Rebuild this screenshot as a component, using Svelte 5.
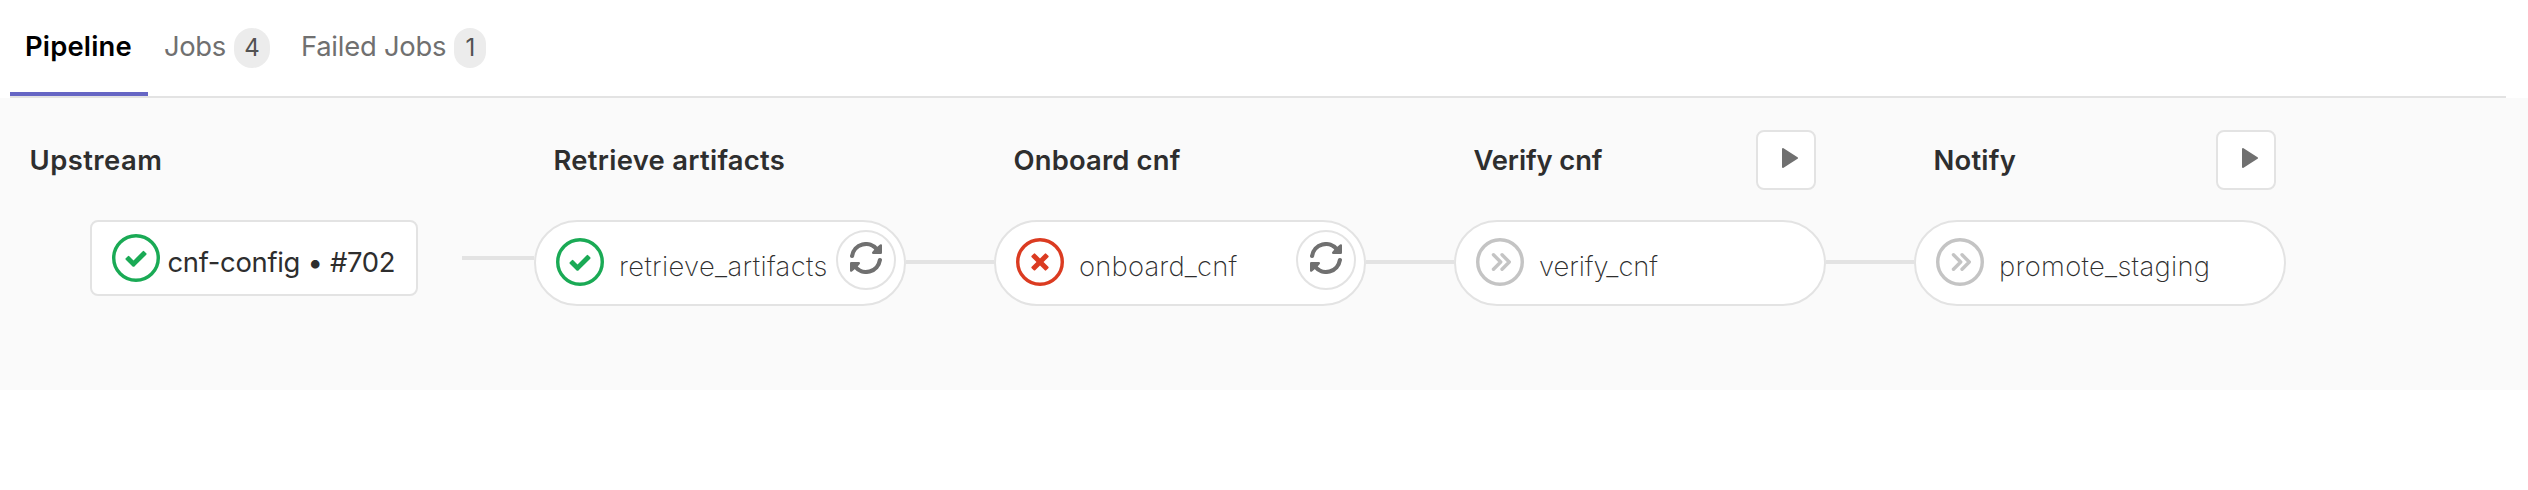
<script>
  const tabs = [
    { label: 'Pipeline', active: true, spacing: 0.18 },
    { label: 'Jobs', count: 4, spacing: -0.35, badgeWidth: 36 },
    { label: 'Failed Jobs', count: 1, spacing: -0.22, badgeWidth: 32 }
  ];

  const stages = [
    { title: 'Retrieve artifacts', titleSpacing: 0.3, job: 'retrieve_artifacts', jobSpacing: 0.35, status: 'success', retry: true },
    { title: 'Onboard cnf', titleSpacing: 0.16, job: 'onboard_cnf', jobSpacing: 0.2, status: 'failed', retry: true },
    { title: 'Verify cnf', titleSpacing: -0.1, job: 'verify_cnf', jobSpacing: -0.04, status: 'skipped', play: true },
    { title: 'Notify', titleSpacing: 0.24, job: 'promote_staging', jobSpacing: 0.3, status: 'skipped', play: true }
  ];
</script>

{#snippet statusIcon(status)}
  <svg class="status {status}" viewBox="0 0 14 14" aria-hidden="true">
    <circle cx="7" cy="7" r="6.5" fill="#fff" stroke="currentColor" />
    {#if status === 'success'}
      <path fill="currentColor" d="M6.278 7.697L5.045 6.464a.296.296 0 0 0-.42-.002l-.613.614a.298.298 0 0 0 .002.42l1.91 1.909a.5.5 0 0 0 .703.005l.265-.265L9.997 6.04a.291.291 0 0 0-.009-.408l-.614-.614a.29.29 0 0 0-.408-.009L6.278 7.697z" />
    {:else if status === 'failed'}
      <path fill="currentColor" d="M7 5.969L5.599 4.568a.29.29 0 0 0-.413.004l-.614.614a.294.294 0 0 0-.004.413L5.968 7l-1.4 1.401a.29.29 0 0 0 .004.413l.614.614c.113.114.3.117.413.004L7 8.032l1.401 1.4a.29.29 0 0 0 .413-.004l.614-.614a.294.294 0 0 0 .004-.413L8.032 7l1.4-1.401a.29.29 0 0 0-.004-.413l-.614-.614a.294.294 0 0 0-.413-.004L7 5.968z" />
    {:else}
      <path fill="none" stroke="currentColor" stroke-width="1" stroke-linecap="round" stroke-linejoin="round" d="M5.1 4.9L7.2 7L5.1 9.1M7.6 4.9L9.7 7L7.6 9.1" />
    {/if}
  </svg>
{/snippet}

<main>
  <nav>
    {#each tabs as tab}
      <a class="tab" class:active={tab.active} href="#top">
        <span style:letter-spacing="{tab.spacing}px">{tab.label}</span>
        {#if tab.count}<b class="badge" style:width="{tab.badgeWidth}px">{tab.count}</b>{/if}
      </a>
    {/each}
  </nav>

  <section class="graph">
    <div class="upstream">
      <h2>Upstream</h2>
      <div class="row">
        <div class="card">
          {@render statusIcon('success')}
          <span>cnf-config • #702</span>
        </div>
        <i class="link"></i>
      </div>
    </div>

    {#each stages as stage, n}
      <div class="stage">
        <header>
          <h2 style:letter-spacing="{stage.titleSpacing}px">{stage.title}</h2>
          {#if stage.play}
            <button class="play" aria-label="Play all">
              <svg viewBox="0 0 16 20"><path d="M1 1L15 10L1 19Z" fill="#707070" stroke="#707070" stroke-width="2" stroke-linejoin="round" /></svg>
            </button>
          {/if}
        </header>
        <div class="row">
          <div class="job">
            {@render statusIcon(stage.status)}
            <span class="name" style:letter-spacing="{stage.jobSpacing}px">{stage.job}</span>
            {#if stage.retry}
              <button class="retry" aria-label="Retry">
                <svg viewBox="0 0 32 32" fill="none" stroke="#707070" stroke-width="4.2" stroke-linecap="round">
                  <path d="M2.1 14A14 14 0 0 1 27 7.5M29.9 18A14 14 0 0 1 5 24.5" />
                  <path d="M30.8 3.4V10.8H23.2L25.5 8ZM1.2 28.6V21.2H8.8L6.5 24Z" fill="#707070" stroke-width="2.4" stroke-linejoin="round" />
                </svg>
              </button>
            {/if}
          </div>
          {#if n < stages.length - 1}<i class="connector"></i>{/if}
        </div>
      </div>
    {/each}
  </section>
</main>

<style>
  :global(body) { background: #fff; }
  main {
    font-family: Inter, sans-serif;
    font-size: 27.4px;
    color: #2e2e2e;
  }
  nav {
    display: flex;
    height: 96px;
    margin: 0 22px 0 10px;
    border-bottom: 2px solid #e3e3e3;
  }
  .tab {
    display: flex;
    align-items: flex-start;
    box-sizing: border-box;
    height: 96px;
    padding: 28px 15px 0 16px;
    line-height: 36px;
    color: #707070;
    text-decoration: none;
    white-space: nowrap;
  }
  .tab.active {
    width: 138px;
    padding-left: 15px;
    color: #000;
    font-weight: 600;
    border-bottom: 4px solid #6666c4;
  }
  .badge {
    height: 40px;
    margin-left: 8px;
    border-radius: 20px;
    background: #ececec;
    color: #525252;
    font-size: 24px;
    font-weight: 400;
    line-height: 40px;
    text-align: center;
  }
  .graph {
    display: flex;
    height: 292px;
    background: #fafafa;
  }
  h2 {
    margin: 0;
    font-size: 27.4px;
    font-weight: 600;
    line-height: 60px;
    white-space: nowrap;
  }
  .upstream {
    width: 534px;
    padding-top: 32px;
  }
  .upstream h2 { padding-left: 29.5px; letter-spacing: 0.47px; }
  .row { display: flex; }
  .upstream .row { padding: 30px 0 0 90px; }
  .card {
    display: flex;
    box-sizing: border-box;
    width: 328px;
    height: 76px;
    padding: 12px 0 0 20px;
    border: 2px solid #e3e3e3;
    border-radius: 8px;
    background: #fff;
    white-space: nowrap;
  }
  .card span {
    margin: 10px 0 0 7.5px;
    line-height: 36px;
    letter-spacing: -0.3px;
  }
  .link {
    width: 72px;
    height: 4px;
    margin: 36px 0 0 44px;
    background: #e3e3e3;
  }
  .stage {
    flex: none;
    width: 460px;
    padding-top: 32px;
  }
  header {
    display: flex;
    justify-content: space-between;
    width: 362px;
    height: 60px;
    margin-bottom: 30px;
  }
  header h2 { padding-left: 19.5px; }
  button {
    display: flex;
    box-sizing: border-box;
    width: 60px;
    height: 60px;
    padding: 0;
    border: 2px solid #e3e3e3;
    background: #fff;
  }
  .play { border-radius: 8px; padding: 16px 0 0 24px; }
  .play svg { width: 16px; height: 20px; }
  .job {
    display: flex;
    flex: none;
    box-sizing: border-box;
    width: 372px;
    height: 86px;
    padding: 8px 8px 0 20px;
    border: 2px solid #e3e3e3;
    border-radius: 43px;
    background: #fff;
  }
  .status { flex: none; width: 48px; height: 48px; }
  .job .status { margin-top: 8px; }
  .success { color: #1aaa55; }
  .failed { color: #db3b21; }
  .skipped { color: #c4c4c4; }
  .name {
    margin: 18px 0 0 15px;
    font-weight: 250;
    line-height: 36px;
    white-space: nowrap;
  }
  .retry {
    flex: none;
    margin-left: auto;
    padding: 10px 0 0 12px;
    border-radius: 50%;
  }
  .retry svg { width: 32px; height: 32px; }
  .connector {
    width: 88px;
    height: 4px;
    margin-top: 40px;
    background: #e3e3e3;
  }
</style>
